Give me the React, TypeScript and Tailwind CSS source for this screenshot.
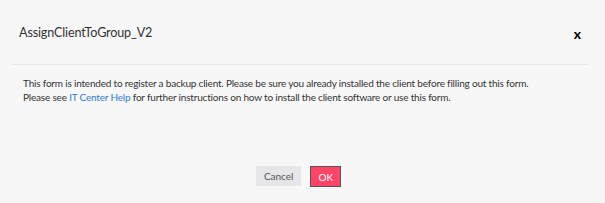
import React from 'react';

export default function App() {
    return (
        <div
            className="w-full h-[203px] bg-[#f7f7f7] text-[#333] flex flex-col"
            style={{ fontFamily: 'Lato, "Open Sans", sans-serif' }}
        >
            <div className="flex items-center justify-between pl-[19px] pr-[24px] h-[64px] pt-[3px]">
                <h1 className="text-[12.6px] tracking-[-0.15px] leading-none text-[#333]">AssignClientToGroup_V2</h1>
                <button className="text-[14px] font-bold leading-none text-black">x</button>
            </div>
            <div className="ml-[12px] mr-[17px] h-px bg-[#e6e6e6]" />
            <div className="pl-[23px] pt-[11px] text-[10px] tracking-[-0.19px] leading-[14px] text-[#333]">
                <p>This form is intended to register a backup client. Please be sure you already installed the client before filling out this form.</p>
                <p>
                    Please see <a className="text-[#2d7ed1]" href="#">IT Center Help</a> for further instructions on how to install the client software or use this form.
                </p>
            </div>
            <div className="mt-auto mb-[16px] flex justify-center gap-[9px] pr-[8px]">
                <button className="h-[20px] px-[8px] bg-[#e6e6ea] text-[#555] text-[10px] leading-none">Cancel</button>
                <button className="h-[21px] px-[7px] bg-[#ff4567] text-white text-[10px] leading-none border border-[#555]">OK</button>
            </div>
        </div>
    );
}
